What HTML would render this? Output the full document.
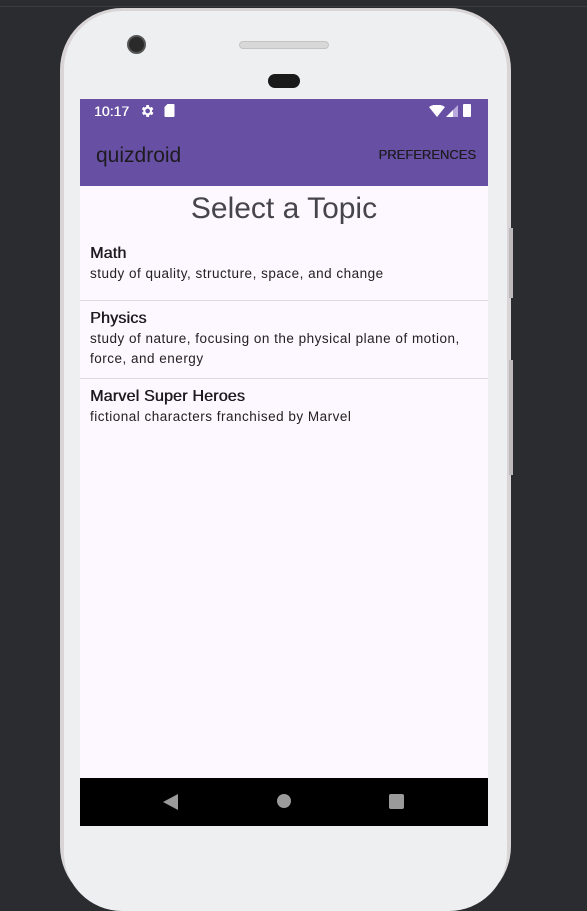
<!DOCTYPE html>
<html><head><meta charset="utf-8"><style>
*{margin:0;padding:0;box-sizing:border-box}
body{width:587px;height:885px;background:#2b2c30;position:relative;overflow:hidden;font-family:"Liberation Sans",sans-serif}
.topline{position:absolute;left:0;top:6px;width:587px;height:1px;background:#3a3b3f}
.phone{position:absolute;left:60px;top:8px;width:451px;height:900px;border-radius:62px;background:#d9d5d7;}
.phone2{position:absolute;left:64px;top:11px;width:443px;height:900px;border-radius:58px;background:#eeeff0;}
.side{position:absolute;left:509px;width:4px;background:#bdb8ba}
.cam{position:absolute;left:127px;top:35px;width:19px;height:19px;border-radius:50%;background:#2a2a2a;border:2px solid #555}
.spk{position:absolute;left:239px;top:41px;width:90px;height:8px;border-radius:4px;background:#d8d8d8;border:1px solid #c4c4c4}
.sens{position:absolute;left:268px;top:74px;width:32px;height:14px;border-radius:7px;background:#1a1a1a}
.screen{position:absolute;left:80px;top:99px;width:408px;height:727px;background:#fdf7ff}
.status{position:absolute;left:0;top:0;width:408px;height:87px;background:#6750a4}
.time{position:absolute;left:14px;top:4px;color:#fff;font-size:14px;text-shadow:0.4px 0 0 #fff}
.title{position:absolute;left:16px;top:45px;color:#1d1b20;font-size:21px}
.pref{position:absolute;right:12px;top:48px;color:#1d1b20;font-size:13px;text-shadow:0.3px 0 0 #1d1b20}
h1{position:absolute;left:0;width:408px;top:93px;text-align:center;font-weight:normal;font-size:30px;color:#47454c}
.item{position:absolute;left:10px;color:#1d1b20}
.item b{font-weight:normal;font-size:16px;display:block;line-height:20px;letter-spacing:0.2px;text-shadow:0.5px 0 0 #1d1b20}
.item span{font-size:13.5px;line-height:20px;display:block;color:#222;letter-spacing:0.5px}
.hr{position:absolute;left:0;width:408px;height:1px;background:#dcdadf}
.nav{position:absolute;left:0;top:679px;width:408px;height:48px;background:#000}
</style></head><body>
<div class="topline"></div>
<div class="phone"></div><div class="phone2"></div>
<div class="side" style="top:228px;height:70px"></div>
<div class="side" style="top:360px;height:115px"></div>
<div class="cam"></div><div class="spk"></div><div class="sens"></div>
<div class="screen">
 <div class="status">
  <div class="time">10:17</div>
  <svg style="position:absolute;left:59px;top:4px" width="16" height="16" viewBox="0 0 24 24"><path fill="#fff" d="M19.4 13a7.5 7.5 0 000-2l2.1-1.6-2-3.5-2.5 1a7 7 0 00-1.7-1L15 3h-4l-.4 2.9a7 7 0 00-1.7 1l-2.5-1-2 3.5L6.6 11a7.5 7.5 0 000 2l-2.1 1.6 2 3.5 2.5-1a7 7 0 001.7 1L11 21h4l.4-2.9a7 7 0 001.7-1l2.5 1 2-3.5zM13 15.5a3.5 3.5 0 110-7 3.5 3.5 0 010 7z"/></svg>
  <svg style="position:absolute;left:84px;top:5px" width="11" height="13" viewBox="0 0 10 13"><path fill="#fff" d="M3 0h6a1 1 0 011 1v11a1 1 0 01-1 1H1a1 1 0 01-1-1V3z"/></svg>
  <svg style="position:absolute;left:349px;top:6px" width="16" height="12" viewBox="0 0 16 12"><path fill="#fff" d="M0 2Q8-3 16 2L8 12z"/></svg>
  <svg style="position:absolute;left:366px;top:6px" width="12" height="12" viewBox="0 0 12 12"><path fill="#b9a9dc" d="M12 0V12H0z"/><path fill="#fff" d="M7 5V12H0z"/></svg>
  <div style="position:absolute;left:383px;top:5px;width:8px;height:13px;background:#fff;border-radius:1px"></div>
  <div class="title">quizdroid</div>
  <div class="pref">PREFERENCES</div>
 </div>
 <h1>Select a Topic</h1>
 <div class="item" style="top:145px"><b>Math</b><span>study of quality, structure, space, and change</span></div>
 <div class="hr" style="top:201px"></div>
 <div class="item" style="top:210px"><b>Physics</b><span>study of nature, focusing on the physical plane of motion,<br>force, and energy</span></div>
 <div class="hr" style="top:279px"></div>
 <div class="item" style="top:288px"><b>Marvel Super Heroes</b><span>fictional characters franchised by Marvel</span></div>
 <div class="nav">
  <svg style="position:absolute;left:83px;top:16px" width="15" height="16" viewBox="0 0 15 16"><path fill="#9a9a9a" d="M15 0V16L0 8z"/></svg>
  <div style="position:absolute;left:197px;top:16px;width:14px;height:14px;border-radius:50%;background:#9a9a9a"></div>
  <div style="position:absolute;left:309px;top:16px;width:15px;height:15px;border-radius:2px;background:#9a9a9a"></div>
 </div>
</div>
</body></html>
